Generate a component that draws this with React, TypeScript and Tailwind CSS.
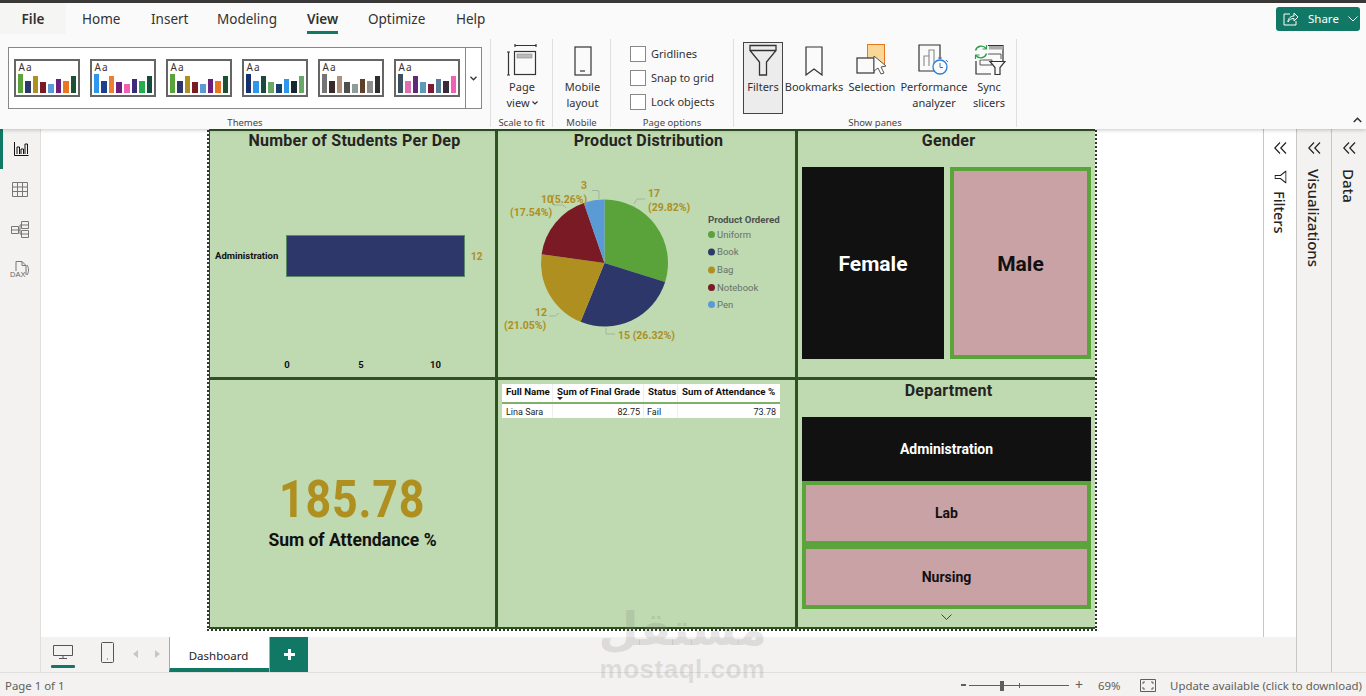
import React from "react";

const UI = "font-['Noto_Sans','Open_Sans',sans-serif]";
const DIN = "font-['Roboto','Liberation_Sans',sans-serif]";

const themes = [
  ["#5aa33a", "#2d3769", "#ae8f1f", "#7a1a24", "#5b9bd5", "#6b1f7a", "#e8751f", "#1c5234"],
  ["#2f96ee", "#1e3f8f", "#ed7d31", "#6b1f7a", "#f25fb3", "#3c2a7a", "#22ad4e", "#174a3e"],
  ["#5aa33a", "#2d3769", "#ae8f1f", "#7a1a24", "#5b9bd5", "#6b1f7a", "#e8751f", "#1c5234"],
  ["#14306e", "#2f96ee", "#1a4a3e", "#6ba868", "#14406e", "#2f96ee", "#16282e", "#6ba868"],
  ["#757575", "#3a2a2a", "#b0907a", "#4f4f4f", "#909c9c", "#5e4028", "#8c8c8c", "#2e2e2e"],
  ["#3a5060", "#de6fb0", "#5e2a7a", "#5b9bb5", "#7a1a34", "#567e9a", "#3a2a3a", "#f25fb3"],
];
const barHeights = [19, 12, 17, 11, 9, 14, 12, 17];

function ThemeThumb({ colors }: { colors: string[] }) {
  return (
    <div className="w-[66px] h-[38px] border-2 border-[#666] bg-white flex flex-col px-[1.500px] shrink-0">
      <div className="text-[10px] leading-[12px] text-[#333] pl-[1px] tracking-[1px]">Aa</div>
      <div className="flex items-end justify-between h-[20px]">
        {colors.map((c, i) => (
          <div key={i} className="w-[5.600px]" style={{ background: c, height: barHeights[i] }} />
        ))}
      </div>
    </div>
  );
}

function RibbonBtn({ w, icon, lines }: { w: string; icon: React.ReactNode; lines: React.ReactNode[] }) {
  return (
    <div className={`${w} flex flex-col items-center text-[11px] leading-[16px] text-[#323130] shrink-0`}>
      <div className="h-[37px] flex items-end justify-center">{icon}</div>
      <div className="mt-[3px] text-center whitespace-nowrap">
        {lines.map((l, i) => (
          <div key={i}>{l}</div>
        ))}
      </div>
    </div>
  );
}

function Group({ w, label, children }: { w: string; label: string; children: React.ReactNode }) {
  return (
    <div className={`${w} shrink-0 h-[88px] border-r border-[#e1dfdd] flex flex-col`}>
      <div className="flex-1 flex min-h-0">{children}</div>
      <div className="text-center text-[9.500px] leading-[12px] text-[#484644] h-[13px] pt-[3px]">{label}</div>
    </div>
  );
}

function Check({ label }: { label: string }) {
  return (
    <div className="flex items-center gap-[5px] h-[16px] text-[11px] text-[#323130]">
      <div className="w-[16px] h-[16px] border border-[#8a8886] bg-white" />
      <span>{label}</span>
    </div>
  );
}

const stroke = { fill: "none", stroke: "#333", strokeWidth: 1.2 };

const PageViewIcon = (
  <svg width="30" height="32" viewBox="0 0 30 32">
    <g {...stroke}>
      <path d="M8 1.500h21M8 0v3M29 0v3M1.500 8v23M0 8h3M0 31h3" />
      <rect x="7.500" y="7.500" width="21" height="23" />
    </g>
    <rect x="10" y="10" width="15" height="4" fill="#bbb" stroke="#888" strokeWidth="0.6" />
  </svg>
);
const MobileIcon = (
  <svg width="18" height="30" viewBox="0 0 18 30">
    <rect x="1" y="1" width="16" height="28" {...stroke} />
    <path d="M6 25h5" stroke="#333" strokeWidth="1.2" />
  </svg>
);
const FilterIcon = (
  <svg width="30" height="32" viewBox="0 0 30 32">
    <path d="M2 1.500h26v5L18.500 18v13h-7V18L2 6.500zM2 6.500h26" fill="none" stroke="#333" strokeWidth="1.3" />
  </svg>
);
const BookmarkIcon = (
  <svg width="18" height="30" viewBox="0 0 18 30">
    <path d="M1 1h16v28l-8-6-8 6z" {...stroke} />
  </svg>
);
const SelectionIcon = (
  <svg width="32" height="32" viewBox="0 0 32 32">
    <rect x="11.500" y="0.500" width="17" height="22" fill="#fad697" stroke="#e8751f" />
    <rect x="1" y="14" width="17" height="15" fill="#fafafa" stroke="#333" strokeWidth="1.2" />
    <path d="M18 12v15l4-3 3 6 3-1-3-6 5-1z" fill="#fff" stroke="#555" strokeWidth="1" />
  </svg>
);
const PerfIcon = (
  <svg width="32" height="32" viewBox="0 0 32 32">
    <path d="M21 27H1V1h21v14" {...stroke} />
    <path d="M6 22V12h5v10M11 22V6h5v14" fill="none" stroke="#888" strokeWidth="1.100" />
    <circle cx="22" cy="23" r="7" fill="#fafafa" stroke="#2b7cd3" strokeWidth="1.300" />
    <path d="M22 19v4.500h3M20 14h4M28 16l2 2" fill="none" stroke="#2b7cd3" strokeWidth="1" />
  </svg>
);
const SyncIcon = (
  <svg width="33" height="32" viewBox="0 0 33 32">
    <path d="M15 1.500h15V17M3 17v13h15" {...stroke} />
    <rect x="16" y="2" width="14" height="3.500" fill="#aaa" />
    <path d="M15 10h13v5M7 16h12v5H7z" fill="none" stroke="#555" strokeWidth="1" />
    <circle cx="8" cy="8" r="7.500" fill="#fafafa" />
    <path d="M2.500 6.500A6 6 0 0 1 13 4.500M13.500 9.500A6 6 0 0 1 3 11.500" fill="none" stroke="#2e9e4f" strokeWidth="1.400" />
    <path d="M13.500 1v4h-4M2.500 15v-4h4" fill="none" stroke="#2e9e4f" strokeWidth="1.200" />
    <path d="M17 17.500h15l-5 6V30.500h-5v-7z" fill="#fafafa" stroke="#333" strokeWidth="1.200" />
  </svg>
);

const tabs = [
  ["Home", "ml-[16px] w-[69px]"],
  ["Insert", "w-[66px]"],
  ["Modeling", "w-[90px]"],
  ["View", "w-[61px]"],
  ["Optimize", "w-[88px]"],
  ["Help", "w-[40px]"],
];

function Ribbon() {
  return (
    <div className="relative z-10 h-[126px] bg-[#fafafa] shadow-[0_1px_4px_rgba(0,0,0,0.22)] shrink-0">
      <div className="h-[31px] flex items-stretch text-[13.500px] text-[#323130]">
        <div className="w-[66px] bg-[#f5f5f4] flex items-center justify-center font-semibold pt-[1px]">File</div>
        {tabs.map(([t, cls]) => (
          <div key={t} className={`${cls} flex items-center shrink-0 pt-[1px]`}>
            {t === "View" ? (
              <span className="relative font-semibold">
                View
                <span className="absolute left-0 right-0 top-[22px] h-[3px] bg-[#117865]" />
              </span>
            ) : (
              t
            )}
          </div>
        ))}
        <div className="flex-1 flex justify-end items-start pt-[4px] pr-[6px]">
          <div className="w-[84px] h-[24px] rounded-[3px] bg-[#117865] text-white text-[11.500px] flex items-center pl-[7px] gap-[9px]">
            <svg width="16" height="14" viewBox="0 0 16 14" fill="none" stroke="#fff" strokeWidth="1">
              <path d="M7 2H1v11h12V9M5 10c0-4 3-6 6-6V1l4 4-4 4V6.500c-3 0-5 1-6 3.500z" />
            </svg>
            <span>Share</span>
            <svg width="10" height="6" viewBox="0 0 10 6" fill="none" stroke="#fff" strokeWidth="1">
              <path d="M.500 .500 5 5 9.500 .500" />
            </svg>
          </div>
        </div>
      </div>
      <div className="flex pt-[5px] relative">
        <Group w="w-[491px]" label="Themes">
          <div className="ml-[8px] mt-[8px] w-[474px] h-[62px] border border-[#8a8886] bg-white flex items-center">
            <div className="w-[457px] pl-[5px] flex gap-[10px]">
              {themes.map((c, i) => (
                <ThemeThumb key={i} colors={c} />
              ))}
            </div>
            <div className="w-[16px] h-full border-l border-[#8a8886] flex items-center justify-center">
              <svg width="7" height="5" viewBox="0 0 7 5" fill="none" stroke="#333" strokeWidth="1.300">
                <path d="M.500 .800 3.500 3.800 6.500 .800" />
              </svg>
            </div>
          </div>
        </Group>
        <Group w="w-[62px]" label="Scale to fit">
          <RibbonBtn
            w="w-full pl-[1px]"
            icon={PageViewIcon}
            lines={[
              "Page",
              <span className="inline-flex items-center gap-[2px]">
                view
                <svg width="6" height="4" viewBox="0 0 6 4" fill="none" stroke="#333" strokeWidth="1.200">
                  <path d="M.500 .500 3 3 5.500 .500" />
                </svg>
              </span>,
            ]}
          />
        </Group>
        <Group w="w-[58px]" label="Mobile">
          <RibbonBtn w="w-full pl-[2px]" icon={MobileIcon} lines={["Mobile", "layout"]} />
        </Group>
        <Group w="w-[123px]" label="Page options">
          <div className="pl-[19px] pt-[7px] flex flex-col gap-[8px]">
            <Check label="Gridlines" />
            <Check label="Snap to grid" />
            <Check label="Lock objects" />
          </div>
        </Group>
        <Group w="w-[283px]" label="Show panes">
          <div className="flex pl-[9px]">
            <div className="w-[40px] h-[72px] mt-[3px] border border-[#444] bg-[#ececec] flex flex-col items-center text-[11px] text-[#323130] leading-[16px]">
              <div className="h-[33px] flex items-end">{FilterIcon}</div>
              <div className="mt-[3px]">Filters</div>
            </div>
            <RibbonBtn w="w-[62px]" icon={BookmarkIcon} lines={["Bookmarks"]} />
            <RibbonBtn w="w-[54px]" icon={SelectionIcon} lines={["Selection"]} />
            <RibbonBtn w="w-[70px]" icon={PerfIcon} lines={["Performance", "analyzer"]} />
            <RibbonBtn w="w-[40px]" icon={SyncIcon} lines={["Sync", "slicers"]} />
          </div>
        </Group>
        <svg className="absolute right-[4px] bottom-[4px]" width="9" height="6" viewBox="0 0 9 6" fill="none" stroke="#333" strokeWidth="1.600">
          <path d="M.800 5 4.500 1.300 8.200 5" />
        </svg>
      </div>
    </div>
  );
}

function Rail() {
  return (
    <div className="w-[41px] shrink-0 bg-[#f3f2f1] border-r border-[#e1dfdd] flex flex-col">
      <div className="h-[40px] border-l-[3px] border-[#117865] flex items-center justify-center">
        <svg width="15" height="14" viewBox="0 0 15 14" fill="none" stroke="#111" strokeWidth="1">
          <path d="M.500 0v13.500h14M3 12V5h2.500v7M7 12V7h2.500v5M11 12V2h2.500v10" />
        </svg>
      </div>
      <div className="h-[40px] flex items-center justify-center">
        <svg width="16" height="15" viewBox="0 0 16 15" fill="none" stroke="#777" strokeWidth="1">
          <path d="M.500 .500h15v14H.500zM.500 5h15M.500 9.500h15M5.500 .500v14M10.500 .500v14" />
        </svg>
      </div>
      <div className="h-[40px] flex items-center justify-center">
        <svg width="18" height="18" viewBox="0 0 18 18" fill="none" stroke="#777" strokeWidth="1">
          <path d="M.500 6.500h7v7h-7zM.500 10h7M10.500 1.500h7v7h-7zM10.500 5h7M10.500 10.500h7v7h-7zM10.500 14h7M7.500 10H9V5h1.500M9 10v4h1.500" />
        </svg>
      </div>
      <div className="h-[40px] flex items-center justify-center">
        <div className="relative w-[18px] h-[17px]">
          <svg width="18" height="17" viewBox="0 0 18 17" fill="none" stroke="#777" strokeWidth="1">
            <path d="M5 10V.500h6l4 4V14M11 .500v4h4M16 4c2 3 2 7 0 10" />
          </svg>
          <span className="absolute left-[-1px] top-[10px] text-[7.500px] leading-[7px] text-[#666] font-['Liberation_Sans',sans-serif]">DAX</span>
        </div>
      </div>
    </div>
  );
}

const titleCls = `${DIN} text-center font-bold text-[16px] leading-[20px] text-[#252423] h-[22px] tracking-[0.25px] pl-[4px]`;

function BarCell() {
  return (
    <div className={`bg-[#bfd9b0] flex flex-col ${DIN}`}>
      <div className={titleCls}>Number of Students Per Dep</div>
      <div className="flex-1 flex items-center pt-[6px]">
        <div className="w-[76px] shrink-0 pl-[5px] pt-[1px] text-[9.500px] font-bold text-[#111] whitespace-nowrap">Administration</div>
        <div className="w-[179px] h-[42px] shrink-0 bg-[#2d3769] border border-[#5a8a6a]" />
        <div className="ml-[6px] text-[10px] font-bold text-[#ae8f1f]">12</div>
      </div>
      <div className="h-[24px] pt-[5px] flex items-start pl-[74px] text-[9.500px] font-bold text-[#111]">
        <span className="w-[6px] text-center">0</span>
        <span className="w-[6px] text-center ml-[68px]">5</span>
        <span className="w-[10px] text-center ml-[66px]">10</span>
      </div>
    </div>
  );
}

function polar(p: number, r = 63.5) {
  const a = 2 * Math.PI * p;
  return [604.5 + r * Math.sin(a), 263 - r * Math.cos(a)];
}
const slices: [number, string][] = [
  [29.82, "#5aa33a"],
  [26.32, "#2d3769"],
  [21.05, "#ae8f1f"],
  [17.54, "#7a1a24"],
  [5.27, "#5b9bd5"],
];

function PieCell() {
  let acc = 0;
  const label = "fill-[#ae8f1f] text-[10.500px] font-bold";
  const legend: [string, string, number][] = [
    ["Uniform", "#5aa33a", 234.5],
    ["Book", "#2d3769", 252],
    ["Bag", "#ae8f1f", 270],
    ["Notebook", "#7a1a24", 287.5],
    ["Pen", "#5b9bd5", 304.5],
  ];
  return (
    <div className={`bg-[#bfd9b0] flex flex-col ${DIN}`}>
      <div className={titleCls}>Product Distribution</div>
      <svg width="297" height="224" viewBox="498 153 297 224">
        {slices.map(([v, c]) => {
          const s = polar(acc / 100);
          acc += v;
          const e = polar(acc / 100);
          return <path key={c} d={`M604.5 263L${s[0]} ${s[1]}A63.5 63.5 0 0 1 ${e[0]} ${e[1]}Z`} fill={c} />;
        })}
        <g fill="none" stroke="#a3b59c" strokeWidth="1">
          <path d="M634 204l3-5h8M599 199v-8l-2-0.500h-5M566 208l-3-3h-9M559 313l-4 3h-6M606 328v6h9" />
        </g>
        <text x="648" y="197" className={label}>17</text>
        <text x="648" y="211" className={label}>(29.82%)</text>
        <text x="581" y="189" className={label}>3</text>
        <text x="541" y="203" className={label}>10</text>
        <text x="551" y="203" className={label}>(5.26%)</text>
        <text x="510" y="216" className={label}>(17.54%)</text>
        <text x="535" y="316" className={label}>12</text>
        <text x="504" y="329" className={label}>(21.05%)</text>
        <text x="618" y="339" className={label}>15 (26.32%)</text>
        <text x="708" y="223" className="fill-[#4b5352] text-[9.700px] font-bold">Product Ordered</text>
        {legend.map(([t, c, y]) => (
          <g key={t}>
            <circle cx="711.500" cy={y} r="3.500" fill={c} />
            <text x="717" y={y + 3} className="fill-[#66736a] text-[9.500px] font-normal">{t}</text>
          </g>
        ))}
      </svg>
    </div>
  );
}

function GenderCell() {
  return (
    <div className={`bg-[#bfd9b0] flex flex-col ${DIN}`}>
      <div className={titleCls}>Gender</div>
      <div className="pt-[14px] px-[4px] flex gap-[6px]">
        <div className="w-[142px] h-[192px] pt-[3px] bg-[#111] text-white font-bold text-[21px] flex items-center justify-center">Female</div>
        <div className="flex-1 h-[192px] pt-[3px] bg-[#c9a2a6] border-[4px] border-[#5ba33b] text-[#111] font-bold text-[21px] flex items-center justify-center">Male</div>
      </div>
    </div>
  );
}

function KpiCell() {
  return (
    <div className={`bg-[#bfd9b0] flex flex-col items-center pt-[89px] ${DIN}`}>
      <div className="text-[52px] leading-[62px] font-bold text-[#ae8f1f] tracking-[1px] scale-x-[0.86]">185.78</div>
      <div className="mt-[-2px] text-[17.500px] leading-[22px] font-bold text-[#111]">Sum of Attendance %</div>
    </div>
  );
}

function TableCell() {
  const head = "border-r border-[#eee] px-[4px] flex items-start pt-[1px] whitespace-nowrap";
  return (
    <div className={`bg-[#bfd9b0] pt-[4px] pl-[4px] ${DIN}`}>
      <div className="w-[278px] bg-white text-[9.700px] leading-[13px] text-[#222]">
        <div className="h-[20px] flex font-bold border-b-2 border-[#7fb069] text-[#111]">
          <div className={`w-[51px] ${head}`}>Full Name</div>
          <div className={`relative w-[91px] ${head}`}>
            Sum of Final Grade
            <span className="absolute left-[4px] top-[13px] w-0 h-0 border-x-[3px] border-x-transparent border-t-[3px] border-t-[#222]" />
          </div>
          <div className={`w-[34px] ${head}`}>Status</div>
          <div className="flex-1 px-[4px] pt-[1px] whitespace-nowrap">Sum of Attendance %</div>
        </div>
        <div className="h-[14px] flex items-center text-[9px] leading-[16px]">
          <div className="w-[51px] border-r border-[#eee] px-[4px] h-full">Lina Sara</div>
          <div className="w-[91px] border-r border-[#eee] px-[3px] h-full text-right">82.75</div>
          <div className="w-[34px] border-r border-[#eee] px-[3px] h-full">Fail</div>
          <div className="flex-1 px-[4px] h-full text-right">73.78</div>
        </div>
      </div>
    </div>
  );
}

function DeptCell() {
  const tile = "h-[64px] pt-[1px] bg-[#c9a2a6] border-[4px] border-[#5ba33b] flex items-center justify-center text-[14px] font-bold text-[#111]";
  return (
    <div className={`bg-[#bfd9b0] flex flex-col ${DIN}`}>
      <div className={`${titleCls} pt-[1px]`}>Department</div>
      <div className="pt-[15px] px-[4px]">
        <div className="h-[64px] pt-[1px] bg-[#111] text-white flex items-center justify-center text-[14px] font-bold">Administration</div>
        <div className={tile}>Lab</div>
        <div className={tile}>Nursing</div>
        <div className="h-[14px] flex items-center justify-center pt-[1px]">
          <svg width="11" height="6" viewBox="0 0 11 6" fill="none" stroke="#444" strokeWidth="1">
            <path d="M.500 .500 5.500 5.500 10.500 .500" />
          </svg>
        </div>
      </div>
    </div>
  );
}

function Report() {
  return (
    <div className="w-[890px] h-[504px] mt-[-2px] border-2 border-dotted border-[#333] shrink-0">
      <div className="w-full h-full bg-[#2f5320] grid grid-cols-[285px_297px_297px] grid-rows-[246px_247px] gap-y-[3px] gap-x-[3px] pt-[2px] pl-[1px] pb-[2px]">
        <BarCell />
        <PieCell />
        <GenderCell />
        <KpiCell />
        <TableCell />
        <DeptCell />
      </div>
    </div>
  );
}

const Chevrons = (
  <svg width="13" height="12" viewBox="0 0 13 12" fill="none" stroke="#222" strokeWidth="1.200">
    <path d="M6 .500.800 6 6 11.500M12 .500 6.800 6 12 11.500" />
  </svg>
);

function Pane({ w, label, bg, filter, size }: { w: string; label: string; bg: string; filter?: boolean; size: string }) {
  return (
    <div className={`${w} ${bg} border-l border-[#c8c6c4] shrink-0 flex flex-col items-center pt-[13px]`}>
      {Chevrons}
      {filter && (
        <svg className="mt-[17px] mb-[8px] -rotate-90" width="13" height="12" viewBox="0 0 13 12" fill="none" stroke="#222" strokeWidth="1.100">
          <path d="M.500 .500h12L8 6v5.500H5V6z" transform="rotate(180 6.500 6)" />
        </svg>
      )}
      <div className={`[writing-mode:vertical-rl] ${size} font-medium leading-[16px] text-[#252423] ${filter ? "" : "mt-[15px]"}`}>{label}</div>
    </div>
  );
}

function PageBar() {
  return (
    <div className="h-[35px] bg-[#f3f2f1] flex shrink-0 text-[12px]">
      <div className="w-[128px] flex items-stretch shrink-0">
        <div className="w-[44px] flex flex-col items-center">
          <svg className="mt-[8px]" width="20" height="14" viewBox="0 0 20 14" fill="none" stroke="#555" strokeWidth="1">
            <path d="M.500 .500h19v10H.500zM10 11v2M6 13.500h8" />
          </svg>
          <div className="mt-auto mb-[4px] w-[24px] h-[3px] rounded-[1px] bg-[#117865]" />
        </div>
        <div className="w-[20px] flex justify-center ml-[12px]">
          <svg className="mt-[5px]" width="13" height="21" viewBox="0 0 13 21" fill="none" stroke="#555" strokeWidth="1">
            <rect x=".500" y=".500" width="12" height="20" rx="1" />
            <path d="M6 17h1" />
          </svg>
        </div>
        <div className="flex items-center gap-[17px] ml-[16px] pb-[1px]">
          <span className="w-0 h-0 border-y-[4px] border-y-transparent border-r-[5px] border-r-[#c8c6c4]" />
          <span className="w-0 h-0 border-y-[4px] border-y-transparent border-l-[5px] border-l-[#c8c6c4]" />
        </div>
      </div>
      <div className="w-[100px] bg-white border-l border-[#aaa] border-b-[4px] border-b-[#117865] flex items-center justify-center text-[11.500px] text-[#252423] pt-[6px] pr-[2px]">Dashboard</div>
      <div className="w-[39px] bg-[#117865] flex items-center justify-center border-l border-[#aaa]">
        <svg width="11" height="11" viewBox="0 0 11 11" fill="#fff">
          <path d="M4 0h3v4h4v3H7v4H4V7H0V4h4z" />
        </svg>
      </div>
    </div>
  );
}

function StatusBar() {
  return (
    <div className="h-[24px] bg-[#f3f2f1] border-t border-[#e1dfdd] flex items-center text-[11.400px] text-[#605e5c] shrink-0 pt-[2px]">
      <div className="pl-[5px]">Page 1 of 1</div>
      <div className="ml-auto flex items-center">
        <span className="w-[5px] h-[2px] bg-[#605e5c]" />
        <div className="relative w-[100px] h-[1px] bg-[#605e5c] ml-[3px]">
          <span className="absolute left-[31px] top-[-4px] w-[4px] h-[10px] bg-[#605e5c]" />
          <span className="absolute left-[50px] top-[-2px] w-[1px] h-[5px] bg-[#605e5c]" />
        </div>
        <span className="ml-[6px] text-[14px] leading-[14px]">+</span>
        <span className="ml-[15px] w-[33px]">69%</span>
        <svg className="ml-[9px]" width="16" height="13" viewBox="0 0 16 13" fill="none" stroke="#605e5c" strokeWidth="1">
          <path d="M.500 .500h15v12H.500zM3 5V3h2M11 3h2v2M13 8v2h-2M5 10H3V8" />
        </svg>
        <span className="ml-[14px] pr-[4px] whitespace-nowrap">Update available (click to download)</span>
      </div>
    </div>
  );
}

export default function App() {
  return (
    <div className={`relative w-[1366px] h-[696px] overflow-hidden flex flex-col bg-white ${UI}`}>
      <div className="h-[3px] bg-[#3b3a39] shrink-0" />
      <Ribbon />
      <div className="flex-1 flex min-h-0">
        <Rail />
        <div className="flex-1 flex flex-col min-w-0">
          <div className="flex-1 flex min-h-0">
            <div className="flex-1 bg-white min-w-0 pl-[166px]">
              <Report />
            </div>
            <Pane w="w-[33px]" label="Filters" bg="bg-white" filter size="text-[14.500px]" />
          </div>
          <PageBar />
        </div>
        <Pane w="w-[35px]" label="Visualizations" bg="bg-[#f3f2f1]" size="text-[15px]" />
        <Pane w="w-[35px]" label="Data" bg="bg-[#f3f2f1]" size="text-[15px]" />
      </div>
      <StatusBar />
      <div className="absolute left-[590px] top-[604px] w-[185px] flex flex-col items-center pointer-events-none text-[#7a7a7a]/20 font-bold">
        <div dir="rtl" lang="ar" className="font-['DejaVu_Sans',sans-serif] text-[46px] leading-[50px] h-[52px]">مستقل</div>
        <div className="font-['Liberation_Sans',sans-serif] text-[26px] leading-[26px] tracking-[0.5px]">mostaql.com</div>
      </div>
    </div>
  );
}
